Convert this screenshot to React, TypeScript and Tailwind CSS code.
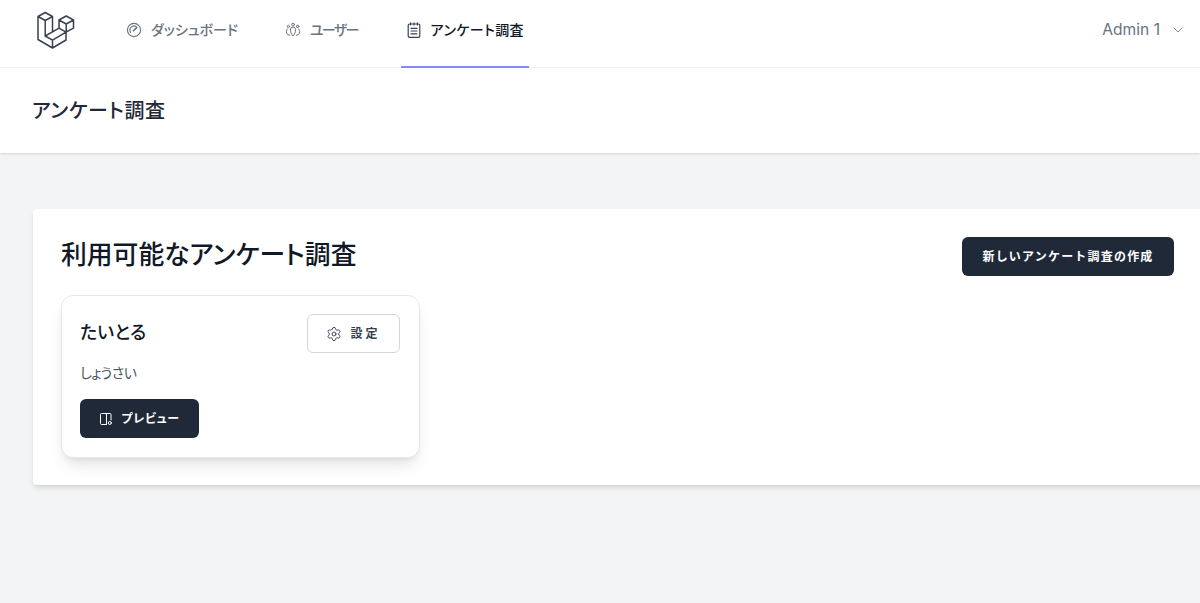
import { Settings, ChevronDown } from "lucide-react";
import type { ReactNode } from "react";

const font = "font-['Inter','Noto_Sans_CJK_JP',sans-serif]";
const palt = "[font-feature-settings:'palt']";

function Logo() {
  return (
    <svg width="38" height="38" viewBox="36.5 10.5 38 38" fill="none" stroke="#374151" strokeWidth="1.5" strokeLinejoin="round" strokeLinecap="round">
      <path d="M37.5 16L44.7 12L52 16L44.7 20ZM37.5 16V39L52 47.5L65.5 39.5V31.7M44.7 20V35.5L52 39.7L65.5 31.7M52 16V31.3L44.7 35.5M52 39.7V47.5M52 31.3L58.5 27.6" />
      <path d="M58.5 19.5L65.7 15.5L73 19.5L65.7 23.5ZM58.5 19.5V27.6L65.5 31.7L73 27.6V19.5M65.7 23.5V31.7" />
    </svg>
  );
}

function GaugeIcon() {
  return (
    <svg width="16" height="16" viewBox="0 0 16 16" fill="none" stroke="currentColor" strokeWidth="1.1" strokeLinecap="round">
      <circle cx="8" cy="8" r="6.6" />
      <path d="M4.6 10.4A4.2 4.2 0 0 1 10.4 4.6" />
      <path d="M7.4 8.8L10.6 5.6" strokeWidth="1.6" />
    </svg>
  );
}

function UsersIcon() {
  return (
    <svg width="16" height="16" viewBox="0 0 16 16" fill="none" stroke="currentColor" strokeWidth="1" strokeLinecap="round" strokeLinejoin="round">
      <circle cx="8" cy="2.6" r="1.4" />
      <circle cx="3.4" cy="4.4" r="1.2" />
      <circle cx="12.6" cy="4.4" r="1.2" />
      <path d="M5.4 7.6a2.6 2.6 0 0 1 5.2 0c0 2.4-1 4.6-2.6 6.4-1.6-1.8-2.6-4-2.6-6.4z" />
      <path d="M2.2 7C1 8.6 1 11 2.4 12.4L4.8 13.4" />
      <path d="M13.8 7C15 8.6 15 11 13.6 12.4L11.2 13.4" />
    </svg>
  );
}

function FormIcon() {
  return (
    <svg width="16" height="16" viewBox="0 0 16 16" fill="none" stroke="currentColor" strokeWidth="1.2" strokeLinecap="round" strokeLinejoin="round">
      <rect x="2.2" y="2" width="11.6" height="13.4" rx="1.4" />
      <path d="M4.6 0.8V3M8 0.8V3M11.4 0.8V3M5 6.4H11M5 9H11M5 11.8H11" />
    </svg>
  );
}

function PreviewIcon() {
  return (
    <svg width="14" height="14" viewBox="0 0 14 14" fill="none" stroke="currentColor" strokeWidth="1" strokeLinecap="round" strokeLinejoin="round">
      <path d="M7.5 12.5H2.5a1 1 0 0 1-1-1v-9a1 1 0 0 1 1-1h8.5a1 1 0 0 1 1 1V8M7.5 1.5v11" />
      <circle cx="10.8" cy="11" r="1.5" />
    </svg>
  );
}

function NavItem({ icon, label, active, className }: { icon: ReactNode; label: string; active?: boolean; className?: string }) {
  return (
    <div className={`-mb-px flex items-center gap-[9px] border-b-2 px-[5px] pb-[6px] text-sm font-medium ${palt} ${active ? "border-[#818cf8] text-[#111827]" : "border-transparent text-[#6b7280]"} ${className ?? ""}`}>
      <span className={active ? "text-[#374151]" : ""}>{icon}</span>
      <span>{label}</span>
    </div>
  );
}

export default function App() {
  return (
    <div className={`${font} min-h-[603px] overflow-hidden bg-[#f3f4f6]`}>
      <nav className="flex h-[68px] items-stretch justify-between border-b border-[#f3f4f6] bg-white">
        <div className="flex items-stretch">
          <div className="flex w-[121px] items-center pb-[8px] pl-[37px]"><Logo /></div>
          <div className="flex items-stretch gap-[36px]">
            <NavItem icon={<GaugeIcon />} label="ダッシュボード" />
            <NavItem icon={<UsersIcon />} label="ユーザー" className="ml-px tracking-[-1.7px]" />
            <NavItem icon={<FormIcon />} label="アンケート調査" active className="ml-[2px] tracking-[0.4px]" />
          </div>
        </div>
        <div className="flex items-center gap-[10px] pb-[7px] pr-[14px] text-[15.6px] text-[#6b7280]">
          <span>Admin 1</span>
          <ChevronDown size={16} strokeWidth={1.25} />
        </div>
      </nav>
      <header className="flex h-[85px] items-center bg-white pl-8 shadow-sm">
        <h2 className={`text-xl font-medium tracking-[0.6px] text-[#1f2937] ${palt}`}>アンケート調査</h2>
      </header>
      <main className="pl-[33px] pt-14">
        <section className="-mr-2 rounded-l bg-white px-7 pb-[27px] pt-7 shadow-md">
          <div className="flex items-center justify-between pr-[6px]">
            <h3 className={`mb-[3px] text-[25.8px] font-medium leading-9 text-[#111827] ${palt}`}>利用可能なアンケート調査</h3>
            <button className="flex h-[39px] w-[212px] items-center justify-center rounded-md bg-[#1f2937] text-xs font-semibold tracking-widest text-white">新しいアンケート調査の作成</button>
          </div>
          <div className="mt-[19px] w-[359px] rounded-xl border border-[#e5e7eb] bg-white py-[18px] pl-[18px] pr-[18px] pb-[19px] shadow-lg">
            <div className="mr-px flex items-center justify-between">
              <div className={`mb-[2px] text-lg font-medium text-[#111827] ${palt}`}>たいとる</div>
              <button className="flex h-[39px] w-[93px] items-center justify-center gap-[8px] rounded-md border border-[#d1d5db] bg-white text-xs font-semibold tracking-[0.25em] text-[#374151]">
                <Settings size={16} strokeWidth={1.4} />
                設定
              </button>
            </div>
            <p className={`mt-[10px] text-sm tracking-[-0.5px] text-[#4b5563] ${palt}`}>しょうさい</p>
            <button className={`mt-4 flex h-[39px] w-[119px] items-center justify-center gap-2 rounded-md bg-[#1f2937] text-xs font-semibold tracking-[0.6px] text-white ${palt}`}>
              <PreviewIcon />
              プレビュー
            </button>
          </div>
        </section>
      </main>
    </div>
  );
}
